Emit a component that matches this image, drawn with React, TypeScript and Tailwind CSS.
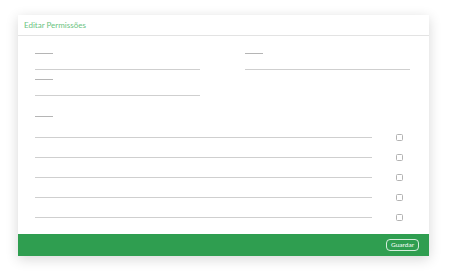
const fields = [
  { id: 'a', col: 0 },
  { id: 'b', col: 1 },
  { id: 'c', col: 0 },
];

const rows = [1, 2, 3, 4, 5];

function Field() {
  return (
    <div className="flex flex-col">
      <div className="h-px w-[18px] bg-[#b5b5b5]" />
      <div className="mt-[15px] h-px w-full bg-[#cfcfcf]" />
    </div>
  );
}

export default function App() {
  return (
    <div className="w-[450px] h-[275px] bg-white pt-[15px] pl-[18px] font-['Lato',sans-serif]">
      <div className="w-[411px] bg-white shadow-[0_3px_12px_rgba(0,0,0,0.16)]">
        {/* Header */}
        <div className="h-[21px] flex items-center px-[6px] border-b border-[#e3e3e3]">
          <span className="text-[8px] leading-none text-[#6ac381]">Editar Permissões</span>
        </div>

        {/* Body */}
        <div className="pt-[17px] pl-[17px] pr-[19px]">
          <div className="grid grid-cols-2 gap-x-[45px] gap-y-[9px]">
            {fields.map((f, i) => (
              <div key={f.id} className={i === 2 ? 'col-start-1' : ''}>
                <Field />
              </div>
            ))}
          </div>

          <div className="mt-[20px] h-px w-[18px] bg-[#b5b5b5]" />

          <div className="mt-[10px] pr-[7px] pb-[7px]">
            {rows.map((r) => (
              <div key={r} className="h-[20px] flex items-center">
                <div className="flex-1 h-px bg-[#cfcfcf]" />
                <div className="ml-[24px] w-[7px] h-[7px] rounded-[1.5px] border border-[#b3b3b3]" />
              </div>
            ))}
          </div>
        </div>

        {/* Footer */}
        <div className="h-[22px] bg-[#2f9e50] flex items-center justify-end pr-[10px]">
          <button className="h-[12px] px-[4px] rounded-[4px] border border-white/80 text-white text-[6.5px] leading-none">
            Guardar
          </button>
        </div>
      </div>
    </div>
  );
}
